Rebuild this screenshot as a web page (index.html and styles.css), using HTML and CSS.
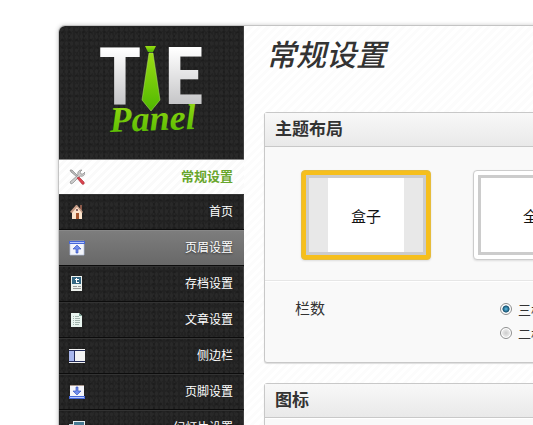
FILE: index.html
```
<!DOCTYPE html>
<html lang="zh-CN">
<head>
    <meta charset="UTF-8">
    <title>常规设置</title>
    <link rel="stylesheet" href="styles.css">
</head>
<body>

<div class="panel">

    <aside class="sidebar">
        <div class="logo">
            <svg width="110" height="100" viewBox="0 0 110 100" role="img" aria-label="TIE Panel">
                <defs>
                    <linearGradient id="silver" x1="0" y1="0" x2="0" y2="1">
                        <stop offset="0.2" stop-color="#fff"/>
                        <stop offset="0.8" stop-color="#c4c4c6"/>
                    </linearGradient>
                    <linearGradient id="green" x1="0" y1="0" x2="0" y2="1">
                        <stop offset="0" stop-color="#9bdc14"/>
                        <stop offset="1" stop-color="#4fb800"/>
                    </linearGradient>
                </defs>
                <text class="logo-big" x="20" y="68" fill="url(#silver)">T</text>
                <text class="logo-big" x="84" y="68" fill="url(#silver)">E</text>
                <path d="M45 10h11l-3 6h-5z" fill="url(#green)"/>
                <path d="M49 17h4l7 47-9 11-9-11z" fill="url(#green)" stroke="#b6e86a" stroke-width=".5"/>
                <text class="logo-name" x="10" y="96" fill="url(#green)" transform="rotate(-2 10 96)">Panel</text>
            </svg>
        </div>
        <ul class="menu">
            <li class="active"><a href="#general">
                <svg class="icon" viewBox="0 0 16 16">
                    <path d="M1 1l2 0 6 6-1 1-6-5z" fill="#bbb" stroke="#777" stroke-width=".6"/>
                    <path d="M2 15l-1-2 8-7c-1-3 1-5 4-5l-2 2 1 2 2 0 2-2c0 3-2 5-5 4l-7 7z" fill="#ccc" stroke="#888" stroke-width=".7"/>
                    <path d="M8 9l2-1 5 5c1 2-1 3-2 2z" fill="#d9434e" stroke="#a82832" stroke-width=".6"/>
                </svg>
                <span>常规设置</span></a></li>
            <li><a href="#home">
                <svg class="icon" viewBox="0 0 16 16">
                    <path d="M11 1h2v5h-2z" fill="#8b5a4a"/>
                    <path d="M3 7l5-5 5 5v8H3z" fill="#fbe3cb"/>
                    <path d="M1 8l6-7h1l6 7-1 1-5-6-5 6z" fill="#c49a85"/>
                    <path d="M7 9h3v6H7z" fill="#a5542c"/>
                    <path d="M7 5h2v2H7z" fill="#866"/>
                </svg>
                <span>首页</span></a></li>
            <li class="hover"><a href="#header">
                <svg class="icon" viewBox="0 0 16 16">
                    <path d="M1 1h14v14H1z" fill="#f4f6fb" stroke="#b5c1e0" stroke-width=".7"/>
                    <path d="M0 1h16v3H0z" fill="#4668d8"/>
                    <path d="M1 2h14v1H1z" fill="#b4c6ff"/>
                    <path d="M8 5l4 4H9v4H7V9H4z" fill="#718eed" stroke="#2848b8" stroke-width=".6"/>
                </svg>
                <span>页眉设置</span></a></li>
            <li><a href="#archive">
                <svg class="icon" viewBox="0 0 16 16">
                    <path d="M2 0h11v15H2z" fill="#eef2ee"/>
                    <path d="M3 1h9v7H3z" fill="#356783"/>
                    <path d="M7 2h1v1h2v1H8v2h2v1H7V4H6V3h1z" fill="#fff"/>
                    <path d="M4 10h4v1H4zM4 12h8v1H4zM9 10h3v1H9z" fill="#999"/>
                </svg>
                <span>存档设置</span></a></li>
            <li><a href="#article">
                <svg class="icon" viewBox="0 0 16 16">
                    <path d="M2 1h8l3 3v11H2z" fill="#e9f5f0"/>
                    <path d="M10 1v3h3z" fill="#7da596"/>
                    <path d="M4 4h1v1H4zM6 4h4v1H6zM4 6h1v1H4zM6 6h5v1H6zM4 8h1v1H4zM6 8h5v1H6zM4 10h1v1H4zM6 10h5v1H6zM4 12h1v1H4zM6 12h4v1H6z" fill="#a3b5ae"/>
                </svg>
                <span>文章设置</span></a></li>
            <li><a href="#sidebar">
                <svg class="icon" viewBox="0 0 16 16">
                    <path d="M0 1h16v14H0z" fill="#f2f2f2"/>
                    <path d="M0 3h5v11H0z" fill="#a9b7ed"/>
                    <path d="M0 2h16v1H0zM0 13h16v1H0zM5 3h1v10H5z" fill="#222b58"/>
                </svg>
                <span>侧边栏</span></a></li>
            <li><a href="#footer">
                <svg class="icon" viewBox="0 0 16 16">
                    <path d="M1 1h14v12H1z" fill="#f5f5fa"/>
                    <path d="M1 1h14v1H1z" fill="#a8988f"/>
                    <path d="M0 12h16v3H0z" fill="#4668d8"/>
                    <path d="M1 13h14v1H1z" fill="#b4c6ff"/>
                    <path d="M7 3h2v4h3l-4 4-4-4h3z" fill="#718eed" stroke="#2848b8" stroke-width=".6"/>
                </svg>
                <span>页脚设置</span></a></li>
            <li><a href="#slider">
                <svg class="icon" viewBox="0 0 16 16">
                    <path d="M4 1h12v11H4z" fill="#e6eef0"/>
                    <path d="M5 2h10v8H5z" fill="#467a92"/>
                    <path d="M0 4h4v9h9v2H0z" fill="#b9cdd4"/>
                </svg>
                <span>幻灯片设置</span></a></li>
        </ul>
    </aside>

    <main class="content">
        <h1>常规设置</h1>

        <section class="box">
            <h2>主题布局</h2>
            <div class="layouts">
                <button type="button" class="layout selected"><span class="boxed"><b>盒子</b></span></button>
                <button type="button" class="layout"><span><b>全宽</b></span></button>
            </div>
            <div class="option">
                <span class="name" id="columns">栏数</span>
                <div class="radios" role="radiogroup" aria-labelledby="columns">
                    <label><input type="radio" name="columns" checked>三栏</label>
                    <label><input type="radio" name="columns">二栏</label>
                </div>
            </div>
        </section>

        <section class="box">
            <h2>图标</h2>
            <div class="option"></div>
        </section>
    </main>

</div>

</body>
</html>
```
FILE: styles.css
```
* {
    box-sizing: border-box;
}
html, body {
    height: 100%;
}
body {
    margin: 0;
    padding: 26px 0 0 59px;
    overflow: hidden;
    background: #fff;
    color: #333;
    font-family: "Liberation Sans", "Noto Sans CJK SC", sans-serif;
}
h1, h2, ul {
    margin: 0;
    padding: 0;
}
ul {
    list-style: none;
}

.panel {
    display: flex;
    min-width: 780px;
    border-radius: 6px 6px 0 0;
    background: repeating-linear-gradient(135deg, #fff 0, #fff 3px, #fcfcfc 3px, #fcfcfc 6px);
    box-shadow: 0 0 0 1px #c4c4c4, 0 0 4px 1px #ccc;
}

/* sidebar */
.sidebar {
    flex: none;
    width: 185px;
    border-radius: 6px 0 0 0;
    background-color: #222;
    background-image:
        radial-gradient(#292929 1px, transparent 2px),
        radial-gradient(#1d1d1d 1px, transparent 2px),
        radial-gradient(#272727 1px, transparent 1px);
    background-size: 5px 7px, 7px 4px, 3px 5px;
    box-shadow: inset -1px 0 1px #444;
}
.logo {
    height: 134px;
    padding: 10px 0 0 41px;
    border-bottom: 1px solid #888;
}
.logo-big {
    font-family: "Roboto Condensed", "Open Sans Condensed", "Open Sans", sans-serif;
    font-size: 80px;
    font-weight: bold;
    text-anchor: middle;
}
.logo-name {
    font-family: "Liberation Serif", serif;
    font-size: 36px;
    font-style: italic;
    font-weight: bold;
}
.menu a {
    display: flex;
    align-items: center;
    justify-content: space-between;
    height: 36px;
    padding: 0 11px 0 10px;
    border-top: 1px solid #333;
    border-bottom: 1px solid #0c0c0c;
    color: #fff;
    font-size: 12px;
    line-height: 18px;
    text-decoration: none;
}
.menu .active a {
    height: 34px;
    border: none;
    background: repeating-linear-gradient(135deg, #fff 0, #fff 3px, #fafafa 3px, #fafafa 6px);
    color: #68a62c;
    font-size: 13px;
    font-weight: bold;
}
.menu .hover a {
    border-top-color: #888;
    background: linear-gradient(#7d7d7d, #686868);
    text-shadow: 0 1px 2px #333;
}
.icon {
    width: 16px;
    height: 16px;
}

/* content */
.content {
    flex: 1;
    padding: 10px 20px 0;
}
h1 {
    margin-bottom: 36px;
    padding-left: 2px;
    font-size: 30px;
    font-style: italic;
    font-weight: 500;
    line-height: 40px;
}
.box {
    margin-bottom: 20px;
    border: 1px solid #c8c8c8;
    border-radius: 3px;
    background: #f9f9f9;
    box-shadow: 0 1px 1px #ddd;
}
.box h2 {
    height: 34px;
    padding-left: 10px;
    border-bottom: 1px solid #c8c8c8;
    background: linear-gradient(#f8f8f8, #e9e9e9);
    font-size: 17px;
    line-height: 34px;
}
.layouts {
    display: flex;
    gap: 42px;
    padding: 23px 36px 20px;
    border-bottom: 1px solid #e6e6e6;
}
.layout {
    width: 130px;
    height: 90px;
    padding: 4px;
    border: 1px solid #ccc;
    border-radius: 4px;
    background: #fff;
    box-shadow: 0 1px 2px #ddd;
    color: #111;
    font: 15px "Liberation Sans", "Noto Sans CJK SC", sans-serif;
}
.layout span {
    display: flex;
    height: 100%;
    border: 3px solid #ccc;
}
.layout b {
    display: flex;
    flex: 1;
    align-items: center;
    justify-content: center;
    font-weight: normal;
}
.layout .boxed {
    padding: 0 19px;
    background: #e8e8e8;
}
.boxed b {
    background: #fff;
}
.selected {
    border-color: #e6bc3c;
    background: #f6bf1c;
}
.option {
    display: flex;
    min-height: 81px;
    padding: 15px 30px;
    border-top: 1px solid #fff;
}
.name {
    width: 205px;
    font-size: 15px;
    line-height: 24px;
}
.radios label {
    display: flex;
    align-items: center;
    gap: 6px;
    height: 24px;
    font-size: 13px;
}
.radios input {
    appearance: none;
    width: 12px;
    height: 12px;
    margin: 0;
    border: 1px solid #8e8f8f;
    border-radius: 50%;
    background: radial-gradient(#ccc, #e8e8e8 50%, #fff 60%);
}
.radios input:checked {
    background: radial-gradient(#5cc0e8 0, #17506f 45%, #fff 55%);
}
```
